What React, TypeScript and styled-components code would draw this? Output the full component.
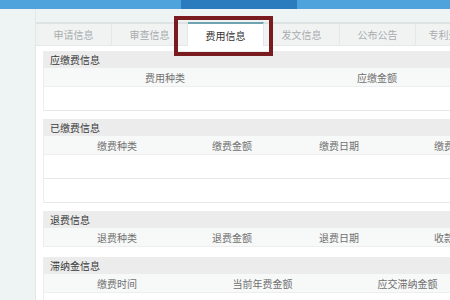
import React from 'react'
import styled, { createGlobalStyle } from 'styled-components'

const GlobalStyle = createGlobalStyle`
  html, body { margin: 0; padding: 0; }
  body {
    width: 450px;
    height: 300px;
    overflow: hidden;
    background: #eef4f3;
    font-family: "Noto Sans CJK SC", "Noto Sans", sans-serif;
  }
`

type Table = {
  title: string
  cols: { label: string; width: number }[]
  bodyRows: number
  gapAfter: number
}

const tabs = ['申请信息', '审查信息', '费用信息', '发文信息', '公布公告', '专利登记簿']

const tables: Table[] = [
  {
    title: '应缴费信息',
    cols: [
      { label: '费用种类', width: 242 },
      { label: '应缴金额', width: 182 },
    ],
    bodyRows: 1,
    gapAfter: 8,
  },
  {
    title: '已缴费信息',
    cols: [
      { label: '缴费种类', width: 146 },
      { label: '缴费金额', width: 84 },
      { label: '缴费日期', width: 130 },
      { label: '缴费人', width: 90 },
    ],
    bodyRows: 2,
    gapAfter: 8,
  },
  {
    title: '退费信息',
    cols: [
      { label: '退费种类', width: 146 },
      { label: '退费金额', width: 84 },
      { label: '退费日期', width: 130 },
      { label: '收款人', width: 90 },
    ],
    bodyRows: 0,
    gapAfter: 10,
  },
  {
    title: '滞纳金信息',
    cols: [
      { label: '缴费时间', width: 146 },
      { label: '当前年费金额', width: 145 },
      { label: '应交滞纳金额', width: 145 },
    ],
    bodyRows: 1,
    gapAfter: 0,
  },
]

const App = () => {
  return (
    <>
      <GlobalStyle />
      <TopBar>
        <BarSeg width={181} />
        <BarSeg width={116} dark />
        <BarSeg />
      </TopBar>
      <Layout>
        <Sidebar />
        <Main>
          <TabBar>
            {tabs.map((t) => (
              <Tab key={t} active={t === '费用信息'}>
                {t}
              </Tab>
            ))}
          </TabBar>
          <Highlight />
          <Panel>
            {tables.map((tb) => (
              <Section key={tb.title} gapAfter={tb.gapAfter}>
                <SectionHead>{tb.title}</SectionHead>
                <ColRow>
                  {tb.cols.map((c) => (
                    <ColCell key={c.label} style={{ width: c.width }}>
                      {c.label}
                    </ColCell>
                  ))}
                </ColRow>
                {Array.from({ length: tb.bodyRows }).map((_, i) => (
                  <EmptyRow key={i} />
                ))}
              </Section>
            ))}
          </Panel>
        </Main>
      </Layout>
    </>
  )
}

export default App

const TopBar = styled.div`
  display: flex;
  height: 9px;
`

const BarSeg = styled.div<{ width?: number; dark?: boolean }>`
  ${(p) => (p.width ? `width: ${p.width}px;` : 'flex: 1;')}
  background: ${(p) => (p.dark ? '#2b7cbf' : '#4ea3dd')};
`

const Layout = styled.div`
  display: flex;
  height: 291px;
`

const Sidebar = styled.div`
  width: 35px;
  flex-shrink: 0;
  background: #edf4f3;
  border-right: 1px solid #e2e9e8;
`

const Main = styled.div`
  position: relative;
  flex: 1;
  padding-top: 13px;
  overflow: hidden;
`

const TabBar = styled.div`
  display: flex;
  height: 21px;
  background: #f1f3f3;
  border-top: 2px solid #dde2e2;
  border-bottom: 1px solid #e4e8e8;
  white-space: nowrap;
`

const Tab = styled.div<{ active?: boolean }>`
  flex-shrink: 0;
  width: 75px;
  display: flex;
  align-items: center;
  justify-content: center;
  font-size: 10px;
  color: ${(p) => (p.active ? '#333' : '#a8adaf')};
  background: ${(p) => (p.active ? '#fff' : 'transparent')};
  border-right: 1px solid #e3e7e7;
  ${(p) =>
    p.active
      ? `margin-top: -2px; border-top: 2px solid #6fa3b2; height: 22px; margin-bottom: -1px;`
      : ''}
`

const Highlight = styled.div`
  position: absolute;
  left: 138px;
  top: 7px;
  width: 91px;
  height: 32px;
  border: 4px solid #7a1b20;
  pointer-events: none;
`

const Panel = styled.div`
  background: #fff;
  padding: 5px 0 0 7px;
  height: 100%;
`

const Section = styled.div<{ gapAfter: number }>`
  margin-bottom: ${(p) => p.gapAfter}px;
  border-left: 1px solid #eceeee;
  width: 480px;
`

const SectionHead = styled.div`
  height: 17px;
  line-height: 17px;
  padding-left: 6px;
  font-size: 10px;
  color: #3a3a3a;
  background: #ececec;
`

const ColRow = styled.div`
  display: flex;
  height: 18px;
  background: #f7f8f8;
  border-bottom: 1px solid #eeeeee;
`

const ColCell = styled.div`
  flex-shrink: 0;
  display: flex;
  align-items: center;
  justify-content: center;
  font-size: 10px;
  color: #707070;
  white-space: nowrap;
`

const EmptyRow = styled.div`
  height: 23px;
  background: #fff;
  border-bottom: 1px solid #e8e8e8;
`
